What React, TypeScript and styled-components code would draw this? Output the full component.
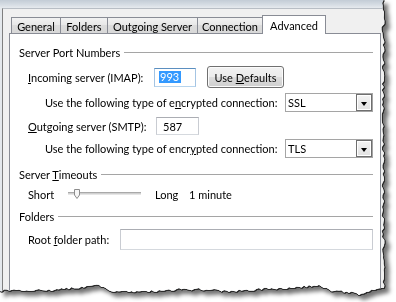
import styled, { createGlobalStyle } from "styled-components";

const GlobalStyle = createGlobalStyle`
  html, body {
    margin: 0;
    padding: 0;
    background: #ffffff;
  }
  body {
    font-family: Lato, "Open Sans", "DejaVu Sans", sans-serif;
    font-size: 11px;
    color: #000000;
  }
  #root {
    width: 396px;
    height: 302px;
    overflow: hidden;
  }
`;

// torn paper edge on the right and bottom of the screenshot
const rand = (() => {
  let s = 1234567;
  return () => {
    s = (s * 16807) % 2147483647;
    return s / 2147483647;
  };
})();

const bottomProfile: [number, number][] = [
  [0, 291], [20, 290], [50, 290], [70, 288], [100, 285], [110, 292],
  [150, 291], [180, 289], [200, 289], [230, 291], [260, 289], [290, 288],
  [318, 285], [330, 290], [350, 292], [360, 295], [370, 290], [386, 288],
];

const profileAt = (x: number) => {
  for (let i = 1; i < bottomProfile.length; i++) {
    const [x1, y1] = bottomProfile[i];
    const [x0, y0] = bottomProfile[i - 1];
    if (x <= x1) return y0 + ((y1 - y0) * (x - x0)) / (x1 - x0);
  }
  return bottomProfile[bottomProfile.length - 1][1];
};

const tornEdge = (() => {
  const pts: string[] = ["0px 0px"];
  for (let y = 0; y <= 286; y += 3) {
    pts.push(`${(383 + (rand() - 0.5) * 3).toFixed(1)}px ${y}px`);
  }
  for (let x = 384; x >= 0; x -= 2.5) {
    pts.push(`${x}px ${(profileAt(x) + (rand() - 0.5) * 2.4).toFixed(1)}px`);
  }
  pts.push(`0px ${profileAt(0)}px`);
  return `polygon(${pts.join(", ")})`;
})();

const Paper = styled.div`
  width: 396px;
  height: 302px;
  filter: drop-shadow(1px 0 0 #2a2a2a) drop-shadow(0 1px 0 #2a2a2a)
    drop-shadow(4px 4px 2px rgba(0, 0, 0, 0.55));
`;

const Window = styled.div`
  width: 390px;
  height: 302px;
  clip-path: ${tornEdge};
  background: #e4e8ec;
  display: flex;
  flex-direction: column;
`;

const TitleStrip = styled.div`
  height: 8px;
  flex-shrink: 0;
  background: linear-gradient(#c3ccd6, #d6dde4 60%, #e6eaee);
`;

const Body = styled.div`
  flex: 1;
  margin-left: 2px;
  border-left: 1px solid #7f7f7f;
  border-top: 1px solid #b8bec5;
  background: #f0f0f0;
  padding-left: 6px;
  display: flex;
  flex-direction: column;
`;

const TabStrip = styled.div`
  display: flex;
  align-items: flex-end;
  padding: 6px 0 0 2px;
`;

const Tab = styled.div<{ $active?: boolean; $w: number }>`
  box-sizing: border-box;
  width: ${(p) => p.$w}px;
  height: ${(p) => (p.$active ? 19 : 16)}px;
  margin-left: -1px;
  margin-bottom: ${(p) => (p.$active ? -1 : 0)}px;
  padding-top: ${(p) => (p.$active ? 0 : 2)}px;
  border: 1px solid #898c95;
  border-bottom: none;
  background: ${(p) =>
    p.$active
      ? "#ffffff"
      : "linear-gradient(#f2f2f2, #e8e8e8 45%, #dcdcdc 50%, #d8d8d8)"};
  display: flex;
  align-items: center;
  justify-content: center;
  white-space: nowrap;
  position: relative;
  z-index: ${(p) => (p.$active ? 1 : 0)};
  &:first-child {
    margin-left: 0;
  }
`;

const Panel = styled.div`
  box-sizing: border-box;
  width: 372px;
  flex: 1;
  background: #ffffff;
  border: 1px solid #898c95;
  padding: 11px 7px 0 9px;
  display: flex;
  flex-direction: column;
`;

const GroupHeader = styled.div<{ $top?: number }>`
  display: flex;
  align-items: center;
  gap: 4px;
  height: 15px;
  margin-top: ${(p) => p.$top ?? 0}px;
  white-space: nowrap;
  &::after {
    content: "";
    flex: 1;
    height: 1px;
    background: #a5a5a5;
  }
`;

const Row = styled.div<{ $top: number; $h: number; $indent: number }>`
  display: flex;
  align-items: center;
  height: ${(p) => p.$h}px;
  margin-top: ${(p) => p.$top}px;
  padding-left: ${(p) => p.$indent}px;
  white-space: nowrap;
`;

const Label = styled.span<{ $w: number }>`
  width: ${(p) => p.$w}px;
  flex-shrink: 0;
`;

const Key = styled.u`
  text-underline-offset: 1px;
`;

const TextBox = styled.div<{ $w: number; $h: number; $focused?: boolean }>`
  box-sizing: border-box;
  width: ${(p) => p.$w}px;
  height: ${(p) => p.$h}px;
  border: 1px solid;
  border-color: ${(p) =>
    p.$focused
      ? "#5b8fc0 #a4c4e3 #b7d4ed #a4c4e3"
      : "#abadb3 #c9ccd2 #d5d9de #c9ccd2"};
  background: #ffffff;
  display: flex;
  align-items: center;
  padding-left: ${(p) => (p.$focused ? 4 : 6)}px;
`;

const Selected = styled.span`
  background: #3399ff;
  color: #ffffff;
  padding: 0 2px 0 1px;
  line-height: 12px;
`;

const Button = styled.div`
  box-sizing: border-box;
  width: 77px;
  height: 22px;
  margin-left: 11px;
  border: 1px solid #707070;
  border-radius: 3px;
  background: linear-gradient(#f2f2f2, #ebebeb 50%, #dddddd 50%, #cfcfcf);
  box-shadow: inset 0 0 0 1px #fbfbfb;
  display: flex;
  align-items: center;
  justify-content: center;
`;

const Select = styled.div`
  box-sizing: border-box;
  width: 88px;
  height: 19px;
  border: 1px solid #a5a5a5;
  background: #ffffff;
  display: flex;
  align-items: center;
  justify-content: space-between;
  padding-left: 2px;
`;

const DropButton = styled.div`
  box-sizing: border-box;
  width: 16px;
  height: 17px;
  border: 1px solid #6f6f6f;
  box-shadow: inset 0 0 0 1px #ffffff;
  background: linear-gradient(#f4f4f4, #e1e1e1);
  display: flex;
  align-items: center;
  justify-content: center;
  &::after {
    content: "";
    margin-top: 2px;
    border-left: 3.5px solid transparent;
    border-right: 3.5px solid transparent;
    border-top: 4px solid #000000;
  }
`;

const Slider = styled.div`
  position: relative;
  width: 73px;
  height: 14px;
  flex-shrink: 0;
  &::before {
    content: "";
    position: absolute;
    left: 0;
    right: 0;
    top: 5px;
    height: 1px;
    border-top: 1px solid #a9a9a9;
    border-bottom: 1px solid #e6e6e6;
    background: #d0d0d0;
  }
`;

const Thumb = styled.svg`
  position: absolute;
  left: 6px;
  top: 2px;
`;

const Spacer = styled.span<{ $w: number }>`
  width: ${(p) => p.$w}px;
  flex-shrink: 0;
`;

const tabs = [
  { label: "General", w: 50 },
  { label: "Folders", w: 48 },
  { label: "Outgoing Server", w: 91 },
  { label: "Connection", w: 66 },
  { label: "Advanced", w: 64, active: true },
];

const App = () => {
  return (
    <>
      <GlobalStyle />
      <Paper>
        <Window>
          <TitleStrip />
          <Body>
            <TabStrip>
              {tabs.map((t) => (
                <Tab key={t.label} $w={t.w} $active={t.active}>
                  {t.label}
                </Tab>
              ))}
            </TabStrip>
            <Panel>
              <GroupHeader>
                <span>Server Port Numbers</span>
              </GroupHeader>
              <Row $top={6} $h={22} $indent={9}>
                <Label $w={126}>
                  <Key>I</Key>ncoming server (IMAP):
                </Label>
                <TextBox $w={42} $h={19} $focused>
                  <Selected>993</Selected>
                </TextBox>
                <Button>
                  <span>
                    Use <Key>D</Key>efaults
                  </span>
                </Button>
              </Row>
              <Row $top={5} $h={19} $indent={26}>
                <Label $w={240}>
                  Use the following type of e<Key>n</Key>crypted connection:
                </Label>
                <Select>
                  <span>SSL</span>
                  <DropButton />
                </Select>
              </Row>
              <Row $top={5} $h={18} $indent={9}>
                <Label $w={128}>
                  <Key>O</Key>utgoing server (SMTP):
                </Label>
                <TextBox $w={43} $h={18}>
                  587
                </TextBox>
              </Row>
              <Row $top={4} $h={19} $indent={26}>
                <Label $w={240}>
                  Use the following type of encr<Key>y</Key>pted connection:
                </Label>
                <Select>
                  <span>TLS</span>
                  <DropButton />
                </Select>
              </Row>

              <GroupHeader $top={9}>
                <span>
                  Server <Key>T</Key>imeouts
                </span>
              </GroupHeader>
              <Row $top={5} $h={14} $indent={9}>
                <Label $w={40}>Short</Label>
                <Slider>
                  <Thumb width="6" height="10" viewBox="0 0 6 10">
                    <path
                      d="M0.5 0.5 H5.5 V6 L3 9.5 L0.5 6 Z"
                      fill="#f6f6f6"
                      stroke="#8c8c8c"
                      strokeWidth="1"
                    />
                  </Thumb>
                </Slider>
                <Spacer $w={14} />
                <Label $w={34}>Long</Label>
                <span>1 minute</span>
              </Row>

              <GroupHeader $top={8}>
                <span>Folders</span>
              </GroupHeader>
              <Row $top={5} $h={21} $indent={9}>
                <Label $w={92}>
                  Root <Key>f</Key>older path:
                </Label>
                <TextBox $w={253} $h={21} />
              </Row>
            </Panel>
          </Body>
        </Window>
      </Paper>
    </>
  );
};

export default App;
